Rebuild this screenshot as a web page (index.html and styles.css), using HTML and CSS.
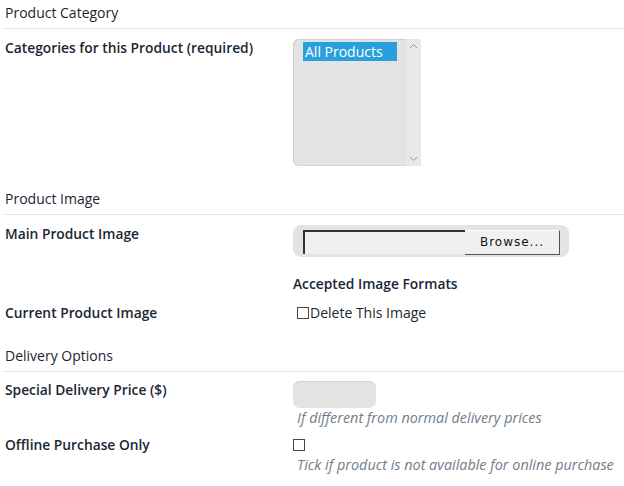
FILE: index.html
```html
<!DOCTYPE html>
<html>
<head>
<meta charset="utf-8">
<link rel="stylesheet" href="styles.css">
</head>
<body>
<div class="form">
  <div class="section-title">Product Category</div>
  <div class="row row-cat">
    <div class="label">Categories for this Product (required)</div>
    <div class="control">
      <div class="listbox">
        <div class="options"><div class="option selected">All Products</div></div>
        <div class="scroll">
          <svg width="9" height="6" viewBox="0 0 9 6"><path d="M1 5 L4.5 1.5 L8 5" fill="none" stroke="#999" stroke-width="1"/></svg>
          <svg width="9" height="6" viewBox="0 0 9 6"><path d="M1 1 L4.5 4.5 L8 1" fill="none" stroke="#999" stroke-width="1"/></svg>
        </div>
      </div>
    </div>
  </div>

  <div class="section-title">Product Image</div>
  <div class="row row-main">
    <div class="label">Main Product Image</div>
    <div class="control">
      <div class="file">
        <div class="file-text"></div>
        <div class="browse">Browse...</div>
      </div>
    </div>
  </div>
  <div class="row row-formats">
    <div class="label"></div>
    <div class="control"><div class="formats">Accepted Image Formats</div></div>
  </div>
  <div class="row row-current">
    <div class="label">Current Product Image</div>
    <div class="control delete"><span class="box box-del"></span><span>Delete This Image</span></div>
  </div>

  <div class="section-title">Delivery Options</div>
  <div class="row row-price">
    <div class="label">Special Delivery Price ($)</div>
    <div class="control">
      <div class="price"></div>
      <div class="hint">If different from normal delivery prices</div>
    </div>
  </div>
  <div class="row row-offline">
    <div class="label">Offline Purchase Only</div>
    <div class="control">
      <span class="box box-off"></span>
      <div class="hint">Tick if product is not available for online purchase</div>
    </div>
  </div>
</div>
</body>
</html>
```
FILE: styles.css
```css
html, body {
  margin: 0;
  padding: 0;
  background: #fff;
}
body {
  font-family: "Open Sans", "Noto Sans", sans-serif;
  font-size: 14px;
  color: #1a2633;
}
.form {
  padding: 0 0 0 4px;
}
.section-title {
  font-size: 14px;
  line-height: 18px;
  padding: 4px 0 6px 1px;
  border-bottom: 1px solid #e3e3e3;
  color: #1a2633;
}
.row {
  display: grid;
  grid-template-columns: 289px 1fr;
}
.label {
  font-weight: 600;
  font-size: 13.8px;
  padding-left: 1px;
  line-height: 18px;
}
.row-cat { padding: 10px 0 20px; }
.listbox {
  width: 128px;
  height: 127px;
  background: #e3e3e3;
  border-radius: 6px 0 0 6px;
  box-shadow: inset 1px 1px 0 #cfcfcf, inset 0 -1px 0 #d6d6d6;
  display: flex;
}
.options {
  flex: 1;
  padding: 3px 0 0 10px;
}
.option {
  width: 94px;
  height: 19px;
  line-height: 19px;
  color: #fff;
  font-size: 14px;
  padding-left: 2px;
  box-sizing: border-box;
}
.option.selected { background: #29a0db; }
.scroll {
  width: 15px;
  background: #e8e8e8;
  display: flex;
  flex-direction: column;
  justify-content: space-between;
  align-items: center;
  padding: 4px 0 4px;
}
.row-main { padding: 10px 0 0; }
.file {
  width: 276px;
  height: 32px;
  background: #e3e3e3;
  border-radius: 8px;
  box-sizing: border-box;
  padding: 5px 0 0 10px;
  display: flex;
}
.file-text {
  width: 160px;
  height: 22px;
  background: #f0f0f0;
  border-top: 2px solid #333;
  border-left: 2px solid #333;
  box-sizing: content-box;
}
.browse {
  width: 94px;
  height: 23px;
  background: #f0f0f0;
  border-right: 1px solid #555;
  border-bottom: 1px solid #555;
  border-top: 1px solid #fff;
  text-align: center;
  line-height: 23px;
  letter-spacing: 1px;
  font-family: "DejaVu Sans", sans-serif;
  font-size: 12px;
  color: #111;
}
.row-formats { padding: 18px 0 0; }
.formats { font-weight: 600; font-size: 13.8px; line-height: 18px; }
.row-current { padding: 11px 0 0; height: 39px; }
.delete { display: flex; align-items: center; align-self: start; line-height: 18px; padding-left: 4px; }
.box {
  display: inline-block;
  width: 12px;
  height: 12px;
  box-sizing: border-box;
  border: 1px solid #444;
  background: #fff;
}
.box-del { margin-right: 1px; }
.row-price { padding: 9px 0 0; }
.price {
  width: 83px;
  height: 27px;
  background: #e3e3e3;
  border-radius: 7px;
  box-shadow: inset 0 1px 0 #d0d0d0;
}
.hint {
  font-style: italic;
  font-size: 14.4px;
  color: #6f7d8c;
  padding-left: 4px;
  line-height: 18px;
  margin-top: 1px;
}
.row-offline { padding: 9px 0 0; }
.box-off { margin-top: 0; }
```
